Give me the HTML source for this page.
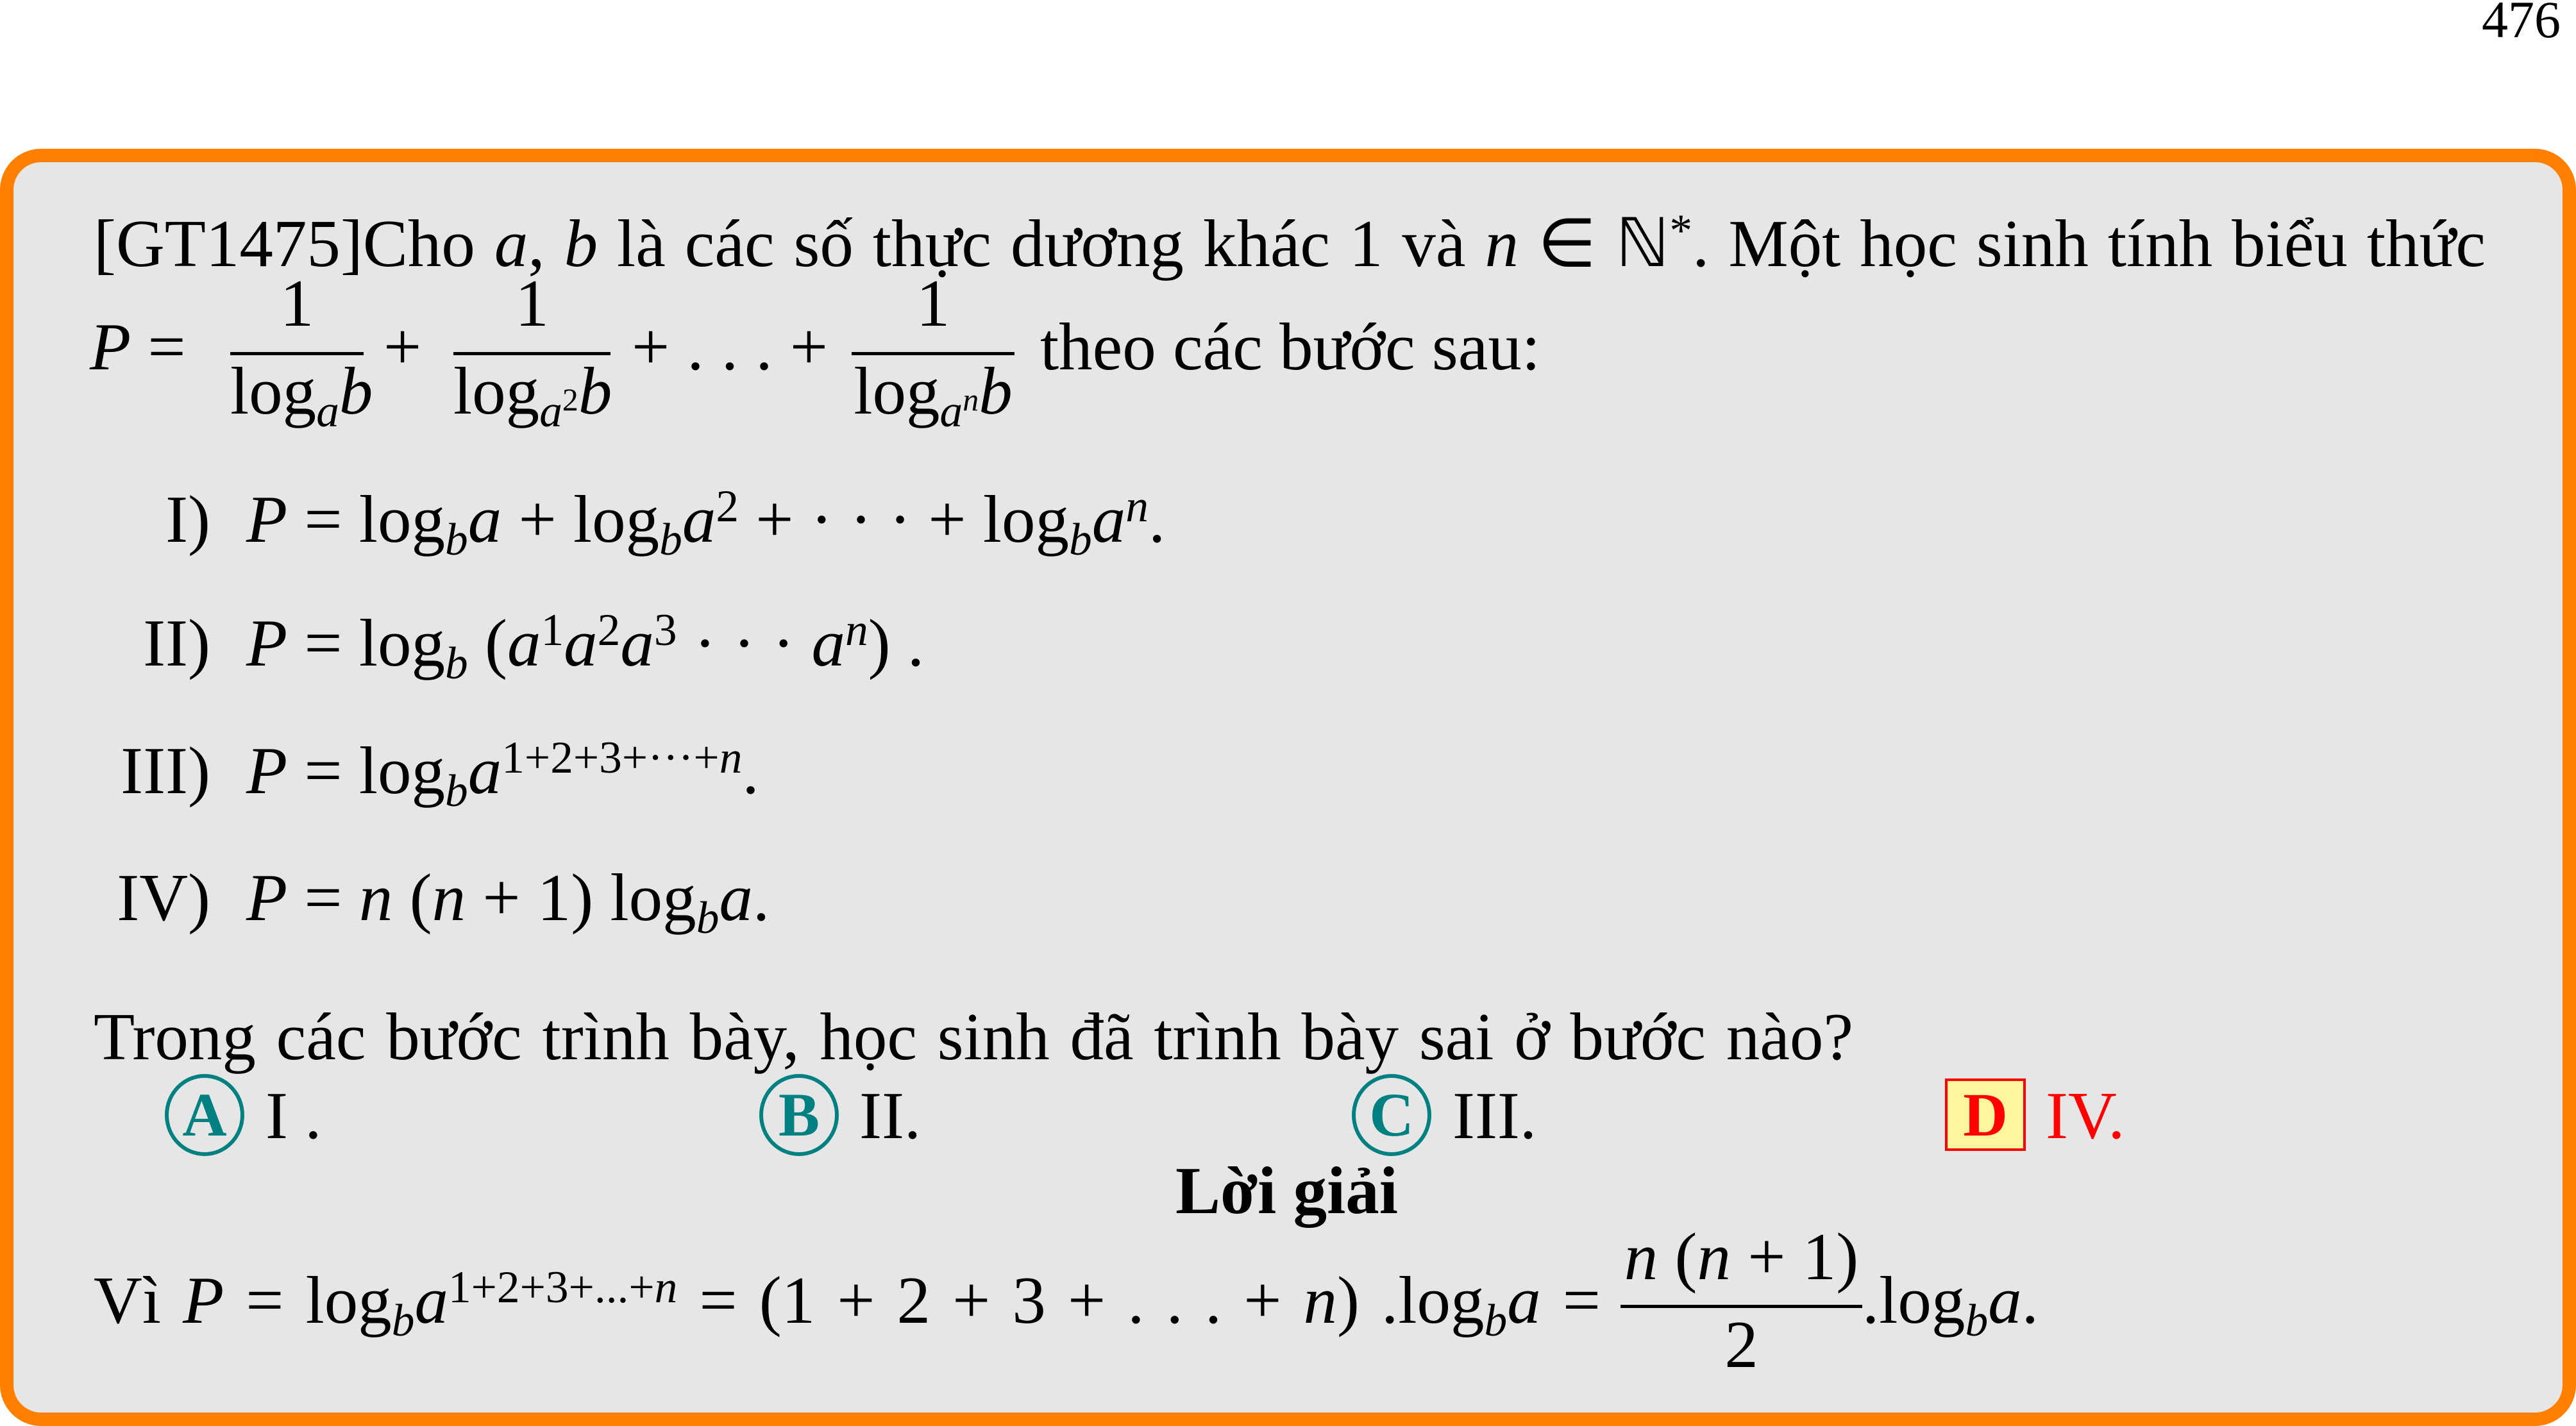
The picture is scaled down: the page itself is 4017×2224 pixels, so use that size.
<!DOCTYPE html>
<html><head><meta charset="utf-8"><style>
html,body{margin:0;padding:0;background:#fff;}
body{width:4017px;height:2224px;position:relative;overflow:hidden;font-family:"Liberation Serif",serif;color:#000;}
.box{position:absolute;left:0;top:232px;width:4017px;height:1992px;box-sizing:border-box;border:21px solid #ff8000;border-radius:64px;background:#e6e6e6;}
.t{position:absolute;white-space:nowrap;font-size:105px;line-height:1;}
sub,sup{font-size:68%;line-height:0;position:relative;vertical-align:baseline;}
sub{top:0.28em;}
sup{top:-0.45em;}
.bar{position:absolute;height:5px;background:#000;}
.c{text-align:center;}
.circ{position:absolute;width:112px;height:116px;border:6px solid #008080;border-radius:50%;color:#008080;font-weight:bold;font-size:96px;line-height:116px;text-align:center;}
.dbox{position:absolute;left:3033px;top:1682px;width:118px;height:105px;border:4px solid #ff0000;background:#fff59d;color:#ff0000;font-weight:bold;font-size:96px;line-height:105px;text-align:center;}
</style></head><body>
<div class="t" style="left:3870px;top:-10px;font-size:82px;">476</div>
<div class="box"></div>

<div class="t" style="left:146px;top:327px;width:3730px;text-align:justify;text-align-last:justify;">[GT1475]Cho <i>a</i>, <i>b</i> là các số thực dương khác 1 và <i>n</i> ∈ ℕ<sup>*</sup>. Một học sinh tính biểu thức</div>

<div class="t" style="left:140px;top:488px;"><i>P</i> =</div>
<div class="t c" style="left:359px;width:208px;top:420px;">1</div>
<div class="bar" style="left:359px;width:208px;top:549px;"></div>
<div class="t c" style="left:359px;width:208px;top:557px;">log<sub><i>a</i></sub><i>b</i></div>
<div class="t" style="left:598px;top:488px;">+</div>
<div class="t c" style="left:707px;width:245px;top:420px;">1</div>
<div class="bar" style="left:707px;width:245px;top:549px;"></div>
<div class="t c" style="left:707px;width:245px;top:557px;">log<sub><i>a</i><span style="font-size:70%;vertical-align:0.5em">2</span></sub><i>b</i></div>
<div class="t" style="left:985px;top:488px;width:306px;text-align:justify;text-align-last:justify;">+ . . . +</div>
<div class="t c" style="left:1328px;width:254px;top:420px;">1</div>
<div class="bar" style="left:1328px;width:254px;top:549px;"></div>
<div class="t c" style="left:1328px;width:254px;top:557px;">log<sub><i>a</i><span style="font-size:70%;vertical-align:0.5em"><i>n</i></span></sub><i>b</i></div>
<div class="t" style="left:1622px;top:488px;">theo các bước sau:</div>

<div class="t" style="left:0;width:328px;text-align:right;top:757px;">I)</div>
<div class="t" style="left:384px;top:757px;"><i>P</i> = log<sub><i>b</i></sub><i>a</i> + log<sub><i>b</i></sub><i>a</i><sup>2</sup> + · · · + log<sub><i>b</i></sub><i>a</i><sup><i>n</i></sup>.</div>

<div class="t" style="left:0;width:328px;text-align:right;top:950px;">II)</div>
<div class="t" style="left:384px;top:950px;"><i>P</i> = log<sub><i>b</i></sub> (<i>a</i><sup>1</sup><i>a</i><sup>2</sup><i>a</i><sup>3</sup> · · · <i>a</i><sup><i>n</i></sup>) .</div>

<div class="t" style="left:0;width:328px;text-align:right;top:1149px;">III)</div>
<div class="t" style="left:384px;top:1149px;"><i>P</i> = log<sub><i>b</i></sub><i>a</i><sup>1+2+3+···+<i>n</i></sup>.</div>

<div class="t" style="left:0;width:328px;text-align:right;top:1347px;">IV)</div>
<div class="t" style="left:384px;top:1347px;"><i>P</i> = <i>n</i> (<i>n</i> + 1) log<sub><i>b</i></sub><i>a</i>.</div>

<div class="t" style="left:146px;top:1564px;width:2744px;text-align:justify;text-align-last:justify;">Trong các bước trình bày, học sinh đã trình bày sai ở bước nào?</div>

<div class="circ" style="left:257px;top:1675px;">A</div>
<div class="t" style="left:414px;top:1687px;">I .</div>
<div class="circ" style="left:1184px;top:1675px;">B</div>
<div class="t" style="left:1340px;top:1687px;">II.</div>
<div class="circ" style="left:2108px;top:1675px;">C</div>
<div class="t" style="left:2265px;top:1687px;">III.</div>
<div class="dbox">D</div>
<div class="t" style="left:3190px;top:1687px;color:#ff0000;">IV.</div>

<div class="t" style="left:1833px;top:1804px;font-weight:bold;">Lời giải</div>

<div class="t" style="left:146px;top:1975px;width:2350px;text-align:justify;text-align-last:justify;">Vì <i>P</i> = log<sub><i>b</i></sub><i>a</i><sup>1+2+3+...+<i>n</i></sup> = (1 + 2 + 3 + . . . + <i>n</i>) .log<sub><i>b</i></sub><i>a</i> =</div>
<div class="t c" style="left:2527px;width:377px;top:1907px;"><i>n</i> (<i>n</i> + 1)</div>
<div class="bar" style="left:2527px;width:377px;top:2035px;"></div>
<div class="t c" style="left:2527px;width:377px;top:2044px;">2</div>
<div class="t" style="left:2904px;top:1975px;">.log<sub><i>b</i></sub><i>a</i>.</div>
</body></html>
